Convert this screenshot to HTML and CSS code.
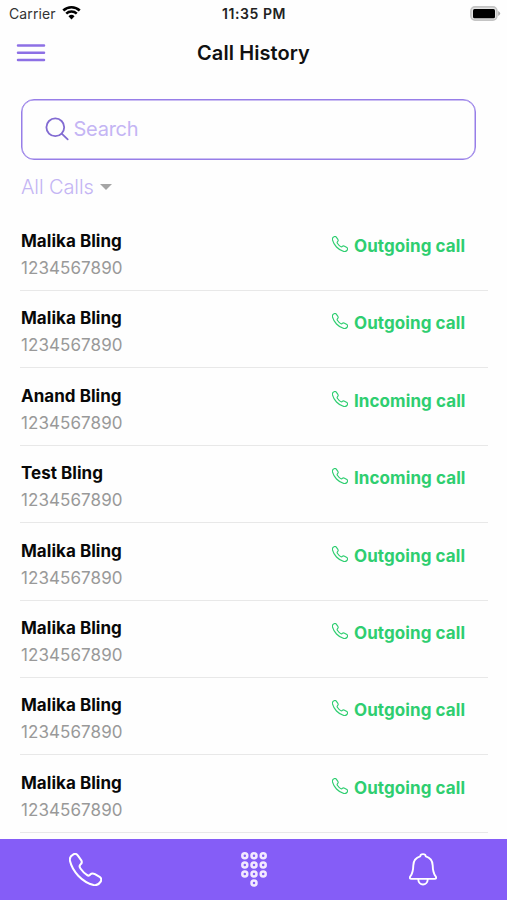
FILE: index.html
```
<!DOCTYPE html>
<html lang="en">
<head>
<meta charset="utf-8">
<title>Call History</title>
<link rel="stylesheet" href="styles.css">
</head>
<body>
<svg class="defs" width="0" height="0" aria-hidden="true">
  <symbol id="phone" viewBox="0 0 98 98"><path d="M12 5C17 1 23 2 26 7L36 21C39 26 38 31 34 34C30 38 31 42 34 46C39 53 45 60 53 65C57 68 60 68 63 64C67 60 72 60 77 63L91 71C97 75 97 80 94 85C89 93 82 97 73 95C38 86 10 54 3 24C1 15 4 9 12 5Z" fill="none" stroke="currentColor" stroke-linejoin="round"/></symbol>
</svg>
<div class="app">
  <div class="status">
    <div class="carrier"><span>Carrier</span>
      <svg class="wifi" viewBox="0 0 18 14"><path d="M1.2 5.1a11.2 11.2 0 0 1 15.6 0M4 8.1a7.2 7.2 0 0 1 10 0" fill="none" stroke="#000" stroke-width="2.4"/><path d="M6.1 10.6a4.2 4.2 0 0 1 5.8 0L9 13.7Z"/></svg>
    </div>
    <span class="time">11:35 PM</span>
    <svg class="battery" viewBox="0 0 31 15"><rect x=".9" y=".9" width="26" height="13.2" rx="4" fill="#e4e4e4" stroke="#c4c4c4" stroke-width="1.6"/><rect x="3" y="3" width="22" height="9.2" rx="1.5"/><path d="M28.2 4.9q4 2.6 0 5.2z" fill="#aaa"/></svg>
  </div>
  <header class="header">
    <svg class="menu" viewBox="0 0 30 20"><path d="M2 2.6h26M2 9.8h26M2 17h26" stroke="#8d70e5" stroke-width="2.5" stroke-linecap="round"/></svg>
    <h1>Call History</h1>
  </header>
  <div class="search">
    <svg viewBox="0 0 24 24"><circle cx="10.3" cy="10.3" r="8.9"/><path d="m16.7 16.7 6 5.6"/></svg>
    <span>Search</span>
  </div>
  <div class="filter"><span>All Calls</span><i class="caret"></i></div>
  <main class="list">
    <div class="row"><div><div class="name">Malika Bling</div><div class="number">1234567890</div></div><div class="call"><svg><use href="#phone"/></svg><span>Outgoing call</span></div></div>
    <div class="row"><div><div class="name">Malika Bling</div><div class="number">1234567890</div></div><div class="call"><svg><use href="#phone"/></svg><span>Outgoing call</span></div></div>
    <div class="row"><div><div class="name">Anand Bling</div><div class="number">1234567890</div></div><div class="call"><svg><use href="#phone"/></svg><span>Incoming call</span></div></div>
    <div class="row"><div><div class="name">Test Bling</div><div class="number">1234567890</div></div><div class="call"><svg><use href="#phone"/></svg><span>Incoming call</span></div></div>
    <div class="row"><div><div class="name">Malika Bling</div><div class="number">1234567890</div></div><div class="call"><svg><use href="#phone"/></svg><span>Outgoing call</span></div></div>
    <div class="row"><div><div class="name">Malika Bling</div><div class="number">1234567890</div></div><div class="call"><svg><use href="#phone"/></svg><span>Outgoing call</span></div></div>
    <div class="row"><div><div class="name">Malika Bling</div><div class="number">1234567890</div></div><div class="call"><svg><use href="#phone"/></svg><span>Outgoing call</span></div></div>
    <div class="row"><div><div class="name">Malika Bling</div><div class="number">1234567890</div></div><div class="call"><svg><use href="#phone"/></svg><span>Outgoing call</span></div></div>
  </main>
  <nav class="tabs">
    <div class="tab"><svg class="tab-phone"><use href="#phone"/></svg></div>
    <div class="tab"><svg class="tab-keys" viewBox="0 0 26 35"><g fill="none" stroke="#f3eaff" stroke-width="2.5"><circle cx="3.8" cy="3.8" r="2.5"/><circle cx="13" cy="3.8" r="2.5"/><circle cx="22.2" cy="3.8" r="2.5"/><circle cx="3.8" cy="12.9" r="2.5"/><circle cx="13" cy="12.9" r="2.5"/><circle cx="22.2" cy="12.9" r="2.5"/><circle cx="3.8" cy="22" r="2.5"/><circle cx="13" cy="22" r="2.5"/><circle cx="22.2" cy="22" r="2.5"/><circle cx="13" cy="31.1" r="2.5"/></g></svg></div>
    <div class="tab"><svg class="tab-bell" viewBox="0 0 28 33"><path d="M11.2 3.4C11.5 .4 16.5 .4 16.8 3.4C21.5 4.7 23.6 8 23.7 12.5C23.8 18 24.5 20.5 26.6 23.3C27.6 24.7 27.3 25.9 25.6 25.9H2.4C.7 25.9 .4 24.7 1.4 23.3C3.5 20.5 4.2 18 4.3 12.5C4.4 8 6.5 4.7 11.2 3.4ZM9.2 26C9.5 33.3 18.5 33.3 18.8 26" fill="none" stroke="#fff" stroke-width="1.9" stroke-linejoin="round"/></svg></div>
  </nav>
</div>
</body>
</html>
```
FILE: styles.css
```
* { box-sizing: border-box; }
body { margin: 0; background: #fefefe; font-family: Inter, "Liberation Sans", sans-serif; color: #080808; }
svg { display: block; flex: none; }
.defs { position: absolute; }
.app { width: 507px; height: 900px; display: flex; flex-direction: column; overflow: hidden; }
.status { height: 28px; flex: none; display: grid; grid-template-columns: 1fr auto 1fr; align-items: center; padding: 0 6px 0 9px; }
.carrier { display: flex; align-items: center; gap: 6px; font-size: 14px; line-height: 20px; color: #333; letter-spacing: .1px; }
.wifi { width: 19px; height: 15px; margin-top: -3px; }
.time { font-size: 14px; font-weight: 600; line-height: 20px; color: #222; letter-spacing: .55px; margin-right: 2px; }
.battery { width: 31px; height: 15px; justify-self: end; margin-top: -2px; }
.header { height: 70.5px; flex: none; display: grid; grid-template-columns: 1fr auto 1fr; align-items: start; padding: 12px 16px 0; }
.menu { width: 30px; height: 20px; margin-top: 3px; }
h1 { margin: 0; font-size: 20px; font-weight: 600; line-height: 27px; color: #111; letter-spacing: .08px; }
.search { flex: none; height: 61.5px; width: 455px; margin-left: 20.5px; border: 1px solid #977ee8; box-shadow: inset 0 0 0 .5px #977ee8; border-radius: 13px; display: flex; align-items: center; gap: 5px; padding-left: 23px; color: #c4b5f4; font-size: 20px; letter-spacing: -.25px; }
.search svg { width: 24px; height: 24px; fill: none; stroke: #826bd2; stroke-width: 1.8; stroke-linecap: round; }
.filter { flex: none; height: 53.6px; margin-left: 21px; display: flex; align-items: center; gap: 6px; font-size: 20px; font-weight: 300; color: #c4b5f4; letter-spacing: -.1px; }
.caret { border: 6px solid transparent; border-top-color: #a5a5a5; border-bottom: 0; }
.list { flex: none; margin: 0 19px 0 20px; }
.row { height: 77.4px; border-bottom: 1px solid #e8e8e8; display: flex; justify-content: space-between; padding: 16.4px 22px 0 1px; }
.name { font-size: 17px; font-weight: 700; line-height: 22px; letter-spacing: .03px; }
.number { font-size: 17px; line-height: 22px; margin-top: 5px; color: #999; letter-spacing: .08px; }
.call { display: flex; align-items: flex-start; gap: 6px; height: 24px; margin-top: 5px; color: #2ece70; font-size: 17px; font-weight: 700; line-height: 22px; letter-spacing: .08px; }
.call span { width: 112px; white-space: nowrap; }
.call svg { width: 16px; height: 16px; margin-top: 1px; stroke-width: 7; }
.tabs { margin-top: auto; flex: none; height: 61.5px; background: #855df7; display: flex; justify-content: space-around; }
.tab { width: 169px; display: flex; justify-content: center; padding-top: 14px; color: #fff; }
.tab-phone { width: 33px; height: 33px; stroke-width: 6; margin-left: 2px; }
.tab-keys { width: 26px; height: 35px; margin-top: -1px; }
.tab-bell { width: 28px; height: 33px; }
```
